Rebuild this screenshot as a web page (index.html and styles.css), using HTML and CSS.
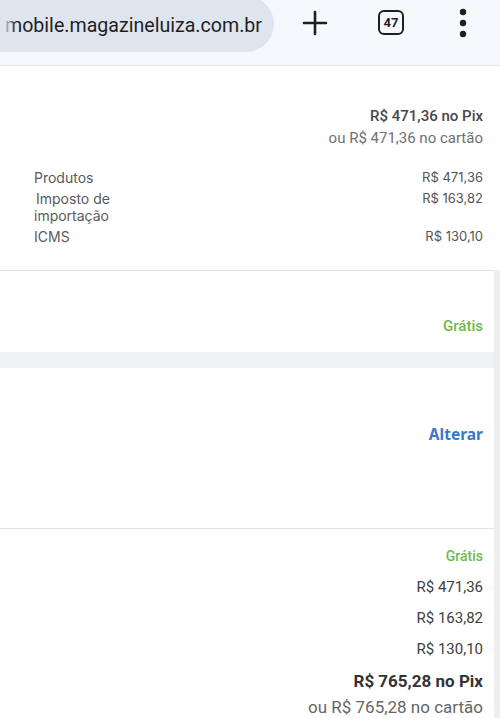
FILE: index.html
```html
<!DOCTYPE html>
<html lang="pt-BR">
<head>
    <meta charset="UTF-8">
    <meta name="viewport" content="width=device-width, initial-scale=1.0">
    <title>Sacola - Magazine Luiza</title>
    <link rel="stylesheet" href="styles.css">
</head>
<body>
    <header class="browser-bar">
        <div class="url-pill">
            <span class="url-text">mobile.magazineluiza.com.br</span>
        </div>
        <div class="bar-icons">
            <svg class="icon-plus" width="28" height="28" viewBox="0 0 28 28">
                <path d="M14 3v22M3 14h22" stroke="#1f1f1f" stroke-width="2.6" stroke-linecap="round" fill="none"/>
            </svg>
            <div class="tab-count">47</div>
            <svg class="icon-menu" width="10" height="30" viewBox="0 0 10 30">
                <circle cx="5" cy="4" r="3.2" fill="#1f1f1f"/>
                <circle cx="5" cy="15" r="3.2" fill="#1f1f1f"/>
                <circle cx="5" cy="26" r="3.2" fill="#1f1f1f"/>
            </svg>
        </div>
    </header>

    <main class="page">
        <section class="summary">
            <div class="price-block">
                <div class="price-pix">R$ 471,36 no Pix</div>
                <div class="price-card">ou R$ 471,36 no cartão</div>
            </div>
            <div class="lines">
                <div class="line">
                    <span class="line-label">Produtos</span>
                    <span class="line-value">R$ 471,36</span>
                </div>
                <div class="line">
                    <span class="line-label indent">Imposto de<br>importação</span>
                    <span class="line-value">R$ 163,82</span>
                </div>
                <div class="line">
                    <span class="line-label">ICMS</span>
                    <span class="line-value">R$ 130,10</span>
                </div>
            </div>
        </section>

        <section class="shipping">
            <span class="free">Grátis</span>
        </section>

        <div class="band"></div>

        <section class="address">
            <a class="change-link" href="#">Alterar</a>
        </section>

        <section class="totals">
            <div class="total-row total-free">Grátis</div>
            <div class="total-row">R$ 471,36</div>
            <div class="total-row">R$ 163,82</div>
            <div class="total-row">R$ 130,10</div>
            <div class="total-pix">R$ 765,28 no Pix</div>
            <div class="total-card">ou R$ 765,28 no cartão</div>
        </section>
    </main>

    <div class="scrollbar"></div>
</body>
</html>
```

FILE: styles.css
```css
body {
    margin: 0;
    font-family: Roboto, "Liberation Sans", sans-serif;
    background-color: #fff;
    color: #404040;
    overflow: hidden;
}

.browser-bar {
    display: flex;
    align-items: flex-start;
    height: 65px;
    background-color: #f7f8fc;
    border-bottom: 1px solid #e3e5eb;
    overflow: hidden;
}

.url-pill {
    position: relative;
    display: flex;
    align-items: center;
    width: 274px;
    height: 56px;
    margin-top: -4px;
    padding-left: 5px;
    box-sizing: border-box;
    background-color: #dfe5ef;
    border-radius: 0 28px 28px 0;
    overflow: hidden;
}

.url-pill::before {
    content: "";
    position: absolute;
    left: 0;
    top: 0;
    width: 16px;
    height: 100%;
    background: linear-gradient(to right, #dfe5ef 20%, rgba(223, 229, 239, 0));
}

.url-text {
    font-size: 19.6px;
    color: #1f1f1f;
    white-space: nowrap;
    margin-top: 2px;
}

.bar-icons {
    display: flex;
    align-items: center;
    height: 45px;
    padding-left: 27px;
}

.icon-plus {
    display: block;
}

.tab-count {
    width: 22px;
    height: 21px;
    margin-left: 49px;
    border: 2.6px solid #1f1f1f;
    border-radius: 6px;
    display: flex;
    justify-content: center;
    align-items: center;
    font-size: 13px;
    font-weight: 700;
    color: #1f1f1f;
}

.icon-menu {
    display: block;
    margin-left: 54px;
}

.summary {
    padding: 39px 17px 25px 34px;
    border-bottom: 1px solid #e2e2e2;
}

.price-block {
    text-align: right;
    margin-bottom: 20px;
}

.price-pix {
    font-size: 15px;
    font-weight: 500;
    line-height: 22px;
    color: #484848;
}

.price-card {
    font-size: 15px;
    line-height: 22px;
    color: #707070;
}

.lines {
    display: flex;
    flex-direction: column;
    gap: 4px;
}

.line {
    display: flex;
    justify-content: space-between;
    align-items: flex-start;
    font-family: Inter, "Noto Sans", sans-serif;
    font-size: 13px;
    line-height: 17px;
    color: #555;
}

.line-label {
    font-size: 14px;
    color: #5a5a5a;
}

.line-label.indent {
    text-indent: 2px;
}

.shipping {
    padding: 44px 17px 15px 34px;
    text-align: right;
}

.free {
    font-size: 15px;
    font-weight: 500;
    line-height: 22px;
    color: #6fb94b;
}

.band {
    height: 16px;
    background-color: #f1f2f4;
}

.address {
    padding: 55px 17px 82px 34px;
    text-align: right;
    line-height: 22px;
    border-bottom: 1px solid #e2e2e2;
}

.change-link {
    font-family: "Noto Sans", "Open Sans", sans-serif;
    font-size: 15.5px;
    font-weight: 700;
    color: #3b78c8;
    text-decoration: none;
}

.totals {
    padding: 12px 17px 0 34px;
    text-align: right;
}

.total-row {
    font-size: 15px;
    line-height: 31px;
    color: #404040;
}

.total-free {
    font-size: 14px;
    font-weight: 500;
    color: #6fb94b;
}

.total-pix {
    margin-top: 3px;
    font-size: 17px;
    font-weight: 700;
    line-height: 26px;
    color: #333;
}

.total-card {
    font-size: 17px;
    line-height: 26px;
    color: #666;
}

.scrollbar {
    position: fixed;
    right: 0;
    top: 270px;
    width: 6px;
    bottom: 0;
    background-color: #eeeeee;
}
```
